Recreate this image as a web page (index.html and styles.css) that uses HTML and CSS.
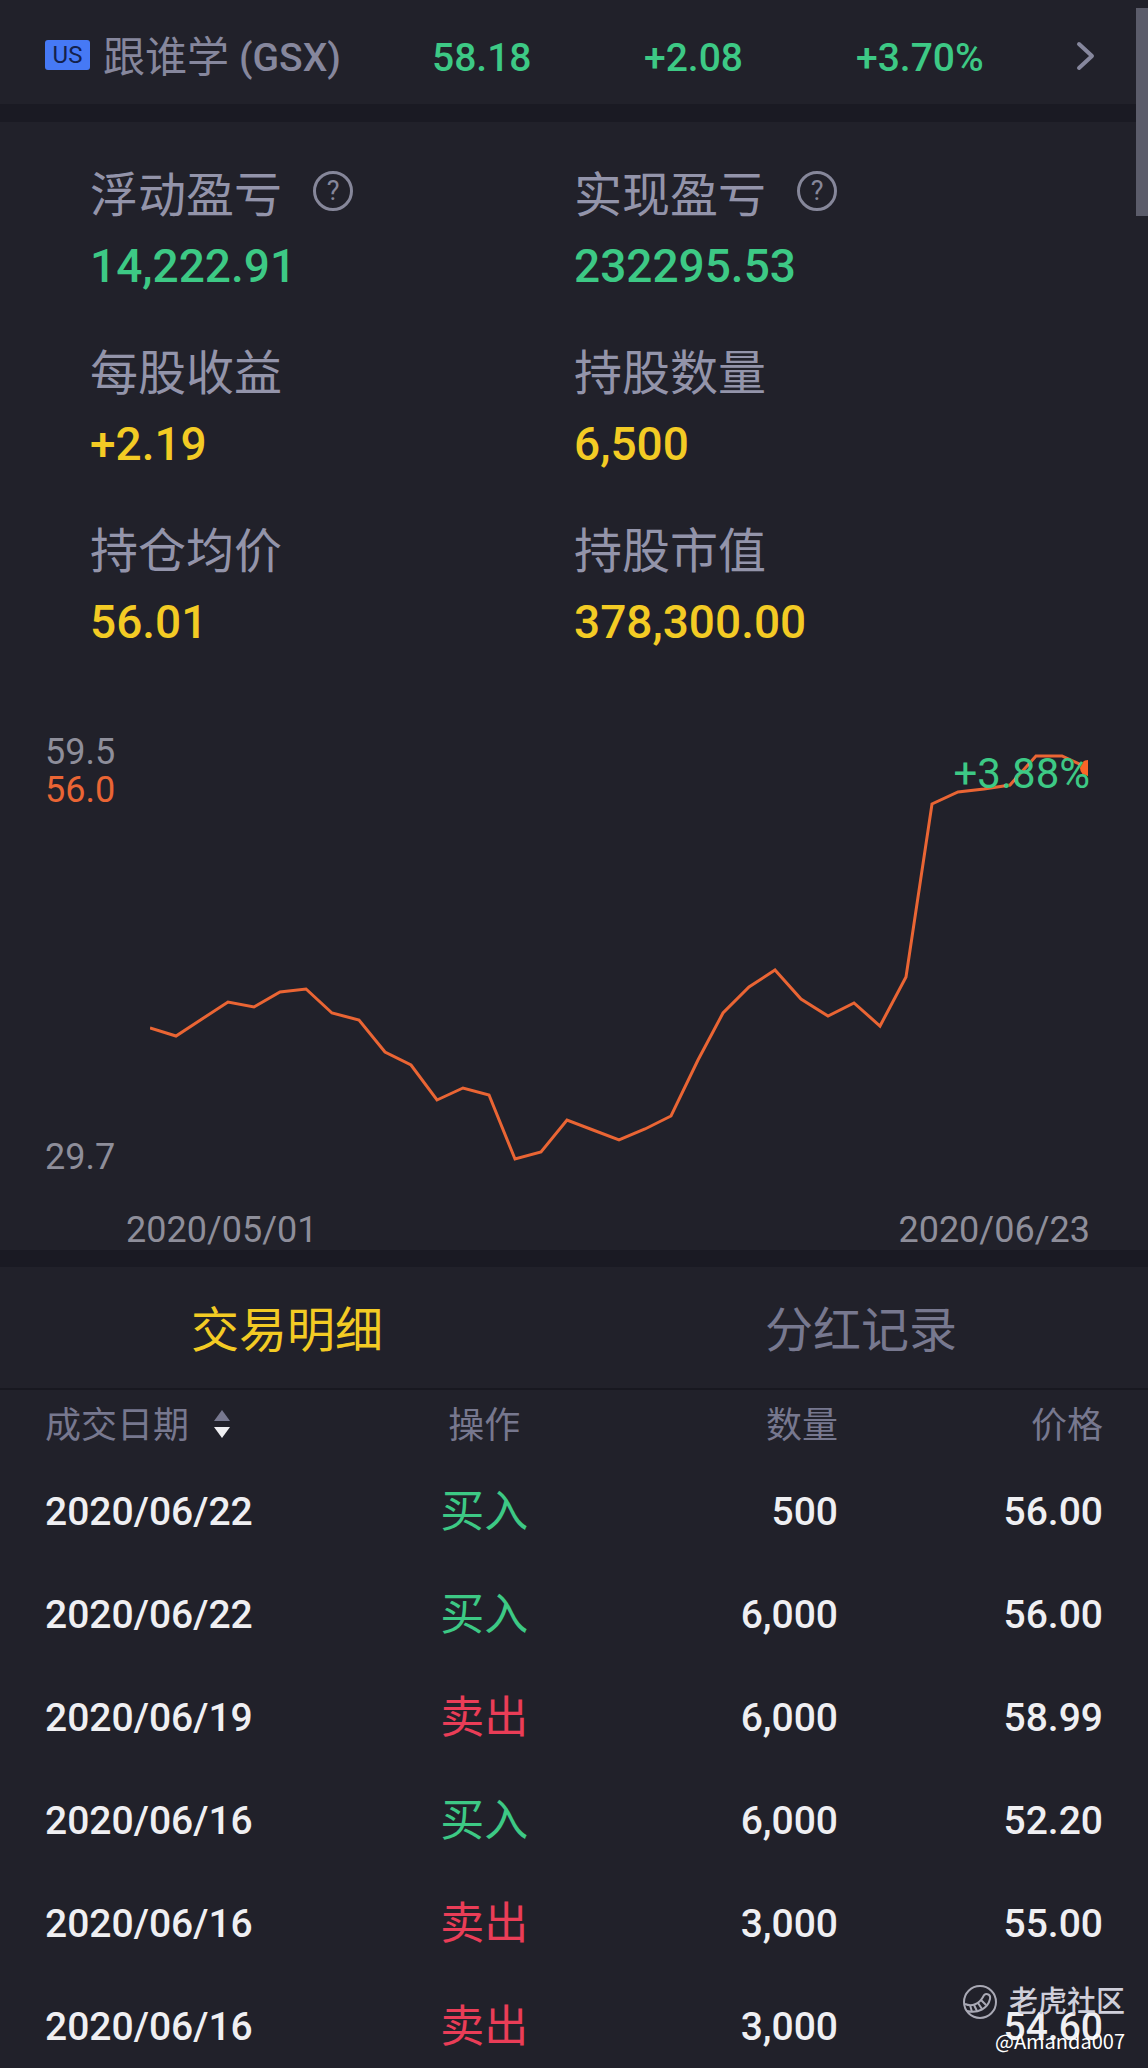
FILE: index.html
```html
<!DOCTYPE html>
<html lang="zh-CN">
<head>
    <meta charset="UTF-8">
    <meta name="viewport" content="width=device-width, initial-scale=1.0">
    <title>跟谁学 (GSX)</title>
    <link rel="stylesheet" href="styles.css">
</head>
<body>
    <div class="page">
        <a class="quote" href="#">
            <span class="quote-name">
                <span class="market">US</span>
                <span class="stock">跟谁学</span>
                <span class="symbol">(GSX)</span>
            </span>
            <span class="quote-value">58.18</span>
            <span class="quote-value">+2.08</span>
            <span class="quote-value">+3.70%</span>
            <svg class="chevron" viewBox="0 0 20 32" aria-hidden="true">
                <path d="M3 4 L16 16 L3 28" />
            </svg>
        </a>

        <section class="stats">
            <div class="stat">
                <div class="stat-label">浮动盈亏 <button type="button" class="help">?</button></div>
                <div class="stat-value up">14,222.91</div>
            </div>
            <div class="stat">
                <div class="stat-label">实现盈亏 <button type="button" class="help">?</button></div>
                <div class="stat-value up">232295.53</div>
            </div>
            <div class="stat">
                <div class="stat-label">每股收益</div>
                <div class="stat-value">+2.19</div>
            </div>
            <div class="stat">
                <div class="stat-label">持股数量</div>
                <div class="stat-value">6,500</div>
            </div>
            <div class="stat">
                <div class="stat-label">持仓均价</div>
                <div class="stat-value">56.01</div>
            </div>
            <div class="stat">
                <div class="stat-label">持股市值</div>
                <div class="stat-value">378,300.00</div>
            </div>
        </section>

        <svg class="chart" viewBox="0 0 1148 593">
            <defs>
                <clipPath id="plot"><rect x="150" y="90" width="938" height="420" /></clipPath>
            </defs>
            <g clip-path="url(#plot)">
                <polyline class="price-line" points="150,371 176,379 202,362 228,345 254,350 280,335 306,332 332,356 359,363 385,395 411,408 437,443 463,431 489,438 515,502 541,495 567,463 593,473 619,483 645,472 671,459 698,403 723,356 749,330 775,313 801,342 828,359 854,346 880,369 906,320 932,147 958,135 984,132 1010,128 1036,99 1062,99 1088,111" />
                <circle class="last-point" cx="1088" cy="111" r="8" />
            </g>
            <text class="axis" x="45" y="107">59.5</text>
            <text class="axis cost" x="45" y="145">56.0</text>
            <text class="axis" x="45" y="512">29.7</text>
            <text class="axis" x="126" y="585">2020/05/01</text>
            <text class="axis end" x="1090" y="585">2020/06/23</text>
            <text class="change end" x="1090" y="131">+3.88%</text>
        </svg>

        <nav class="tabs">
            <button type="button" class="tab active">交易明细</button>
            <button type="button" class="tab">分红记录</button>
        </nav>

        <table class="trades">
            <thead>
                <tr>
                    <th class="col-date">成交日期
                        <svg class="sort" viewBox="0 0 16 28" aria-hidden="true">
                            <path class="asc" d="M8 0 L16 11 H0 Z" />
                            <path class="desc" d="M8 28 L16 17 H0 Z" />
                        </svg>
                    </th>
                    <th class="col-side">操作</th>
                    <th class="col-amount">数量</th>
                    <th class="col-price">价格</th>
                </tr>
            </thead>
            <tbody>
                <tr><td>2020/06/22</td><td class="side buy">买入</td><td>500</td><td>56.00</td></tr>
                <tr><td>2020/06/22</td><td class="side buy">买入</td><td>6,000</td><td>56.00</td></tr>
                <tr><td>2020/06/19</td><td class="side sell">卖出</td><td>6,000</td><td>58.99</td></tr>
                <tr><td>2020/06/16</td><td class="side buy">买入</td><td>6,000</td><td>52.20</td></tr>
                <tr><td>2020/06/16</td><td class="side sell">卖出</td><td>3,000</td><td>55.00</td></tr>
                <tr><td>2020/06/16</td><td class="side sell">卖出</td><td>3,000</td><td>54.60</td></tr>
            </tbody>
        </table>

        <div class="scroll-thumb"></div>

        <div class="watermark">
            <div class="watermark-brand">
                <svg class="watermark-logo" viewBox="0 0 34 34" aria-hidden="true">
                    <circle cx="17" cy="17" r="16" />
                    <path d="M2 19 C9 22 16 19 20 12 C22 7 28 9 27 14 C25 23 15 29 4 26" />
                    <path d="M7 20 L9 27 M11 20 L14 26 M15 18 L19 24 M18 15 L23 20" />
                </svg>
                <span>老虎社区</span>
            </div>
            <div class="watermark-user">@Amanda007</div>
        </div>
    </div>
</body>
</html>
```

FILE: styles.css
```css
* {
    box-sizing: border-box;
}

body {
    margin: 0;
    background: #21212a;
    color: #efeff2;
    font-family: Roboto, "Noto Sans CJK SC", sans-serif;
}

.page {
    position: relative;
    height: 100vh;
    overflow: hidden;
}

button {
    padding: 0;
    border: none;
    background: none;
    color: inherit;
    font-family: inherit;
    cursor: pointer;
}

/* quote bar */
.quote {
    display: flex;
    align-items: center;
    height: 122px;
    padding: 12px 52px 0 45px;
    border-bottom: 18px solid #1a1a23;
    color: #3dc985;
    text-decoration: none;
}

.quote-name {
    display: flex;
    flex: 1;
    align-items: center;
    color: #86879d;
}

.market {
    width: 45px;
    margin-right: 13px;
    margin-bottom: 6px;
    border-radius: 3px;
    background: #4679f5;
    color: #14214c;
    font-size: 24px;
    line-height: 30px;
    text-align: center;
}

.stock {
    margin-right: 10px;
    font-size: 42px;
    line-height: 60px;
}

.symbol,
.quote-value {
    font-size: 39px;
    font-weight: 500;
}

.quote-value {
    width: 212px;
}

.chevron {
    width: 20px;
    height: 32px;
    margin-left: 8px;
    margin-bottom: 4px;
    fill: none;
    stroke: #86879d;
    stroke-width: 4;
    stroke-linecap: round;
    stroke-linejoin: round;
}

/* position summary */
.stats {
    display: grid;
    grid-template-columns: 1fr 1fr;
    row-gap: 32px;
    padding-top: 33px;
}

.stat:nth-child(odd) {
    padding-left: 90px;
}

.stat-label {
    display: flex;
    align-items: center;
    gap: 31px;
    height: 72px;
    margin-bottom: 4px;
    color: #9394aa;
    font-size: 48px;
}

.help {
    width: 40px;
    height: 40px;
    border: 3px solid #86879a;
    border-radius: 50%;
    color: #86879a;
    font-size: 27px;
    line-height: 34px;
}

.stat-value {
    color: #f3cb24;
    font-size: 46px;
    font-weight: 500;
    line-height: 70px;
}

.stat-value.up {
    color: #3dc985;
}

/* price chart */
.chart {
    display: block;
    width: 100%;
}

.price-line {
    fill: none;
    stroke: #ea6534;
    stroke-width: 3;
}

.last-point {
    fill: #fa6428;
}

.axis {
    fill: #8e8e9a;
    font-size: 36px;
}

.axis.cost {
    fill: #ea6534;
}

.change {
    fill: #3dc985;
    font-size: 42px;
}

.end {
    text-anchor: end;
}

/* tabs */
.tabs {
    display: flex;
    border-top: 17px solid #1a1a23;
    border-bottom: 2px solid #181820;
}

.tab {
    flex: 1;
    height: 121px;
    padding-bottom: 4px;
    color: #77788f;
    font-size: 48px;
}

.tab.active {
    color: #f3cb24;
}

/* trade list */
.trades {
    width: 100%;
    table-layout: fixed;
    border-collapse: collapse;
}

.trades th {
    height: 70px;
    padding: 2px 0 0;
    color: #77788f;
    font-size: 36px;
    font-weight: 400;
    line-height: 40px;
    text-align: right;
}

.trades td {
    height: 103px;
    padding: 0;
    font-size: 39px;
    font-weight: 500;
    line-height: 44px;
    text-align: right;
}

.trades th:first-child,
.trades td:first-child {
    padding-left: 45px;
    text-align: left;
}

.trades th:last-child,
.trades td:last-child {
    padding-right: 45px;
}

.trades .col-date {
    width: 34%;
}

.trades .col-side {
    width: 16%;
    padding-left: 4px;
    text-align: center;
}

.trades .col-amount {
    width: 23%;
}

.trades .side {
    padding-left: 4px;
    font-size: 44px;
    font-weight: 400;
    text-align: center;
}

.trades .buy {
    color: #3dc985;
}

.trades .sell {
    color: #ea3d57;
}

.sort {
    width: 16px;
    height: 28px;
    margin-left: 16px;
}

.asc {
    fill: #77788f;
}

.desc {
    fill: #efeff2;
}

/* overlays */
.scroll-thumb {
    position: absolute;
    top: 8px;
    right: 0;
    width: 12px;
    height: 208px;
    background: #5b5c6a;
}

.watermark {
    position: absolute;
    right: 23px;
    bottom: 9px;
    text-align: right;
}

.watermark-brand {
    display: flex;
    align-items: center;
    gap: 12px;
    color: #cfcfda;
    font-size: 29px;
    font-weight: 500;
    line-height: 42px;
}

.watermark-logo {
    width: 34px;
    height: 34px;
    fill: none;
    stroke: #a9a9b5;
    stroke-width: 2;
}

.watermark-user {
    color: #fff;
    font-family: "Noto Sans CJK SC", sans-serif;
    font-size: 20px;
    line-height: 36px;
}
```
